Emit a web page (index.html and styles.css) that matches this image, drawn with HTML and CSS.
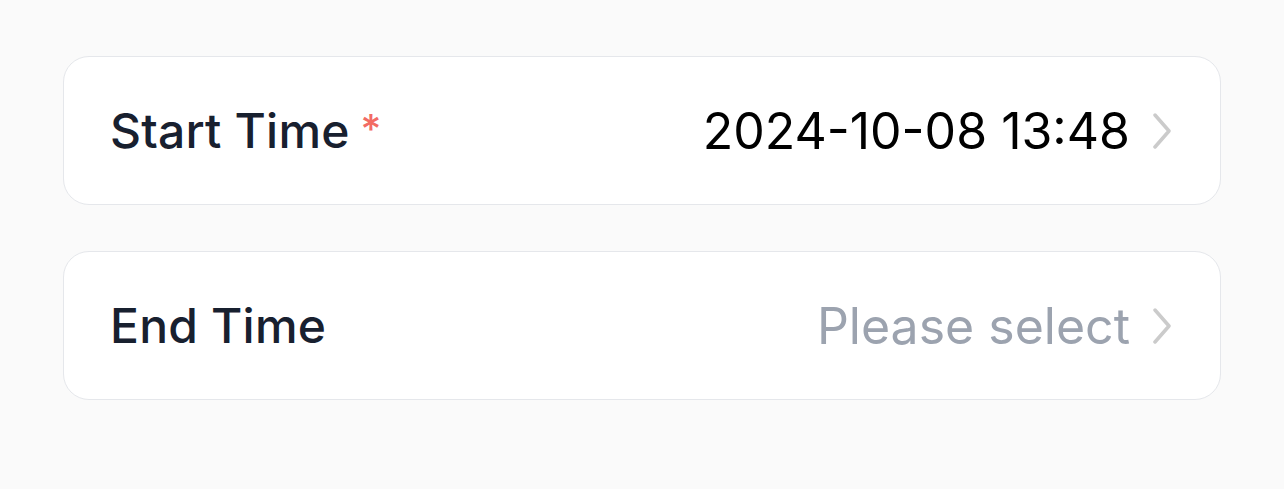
FILE: index.html
```html
<!DOCTYPE html>
<html lang="en">
<head>
    <meta charset="UTF-8">
    <title>Time Range</title>
    <link rel="stylesheet" href="styles.css">
</head>
<body>
    <div class="form">
        <div class="field">
            <span class="label">Start Time<span class="required">*</span></span>
            <span class="value">2024-10-08 13:48</span>
            <svg class="chevron" viewBox="0 0 20 36"><path d="M3 2 L17 18 L3 34" /></svg>
        </div>
        <div class="field">
            <span class="label">End Time</span>
            <span class="value placeholder">Please select</span>
            <svg class="chevron" viewBox="0 0 20 36"><path d="M3 2 L17 18 L3 34" /></svg>
        </div>
    </div>
</body>
</html>
```

FILE: styles.css
```css
body {
    margin: 0;
    padding: 56px 63px 0 63px;
    background-color: #fafafa;
    font-family: Inter, "Noto Sans", sans-serif;
}

.form {
    display: flex;
    flex-direction: column;
    gap: 46px;
}

.field {
    display: flex;
    align-items: center;
    height: 147px;
    padding: 0 48px 0 46px;
    background-color: #fff;
    border: 1px solid #e5e7eb;
    border-radius: 26px;
}

.label {
    flex-grow: 1;
    font-size: 48px;
    font-weight: 500;
    color: #18202f;
    display: flex;
    align-items: flex-start;
    letter-spacing: 0.2px;
}

.required {
    color: #f26b64;
    font-size: 40px;
    margin-left: 11px;
    line-height: 1;
    margin-top: 8px;
}

.value {
    font-size: 50px;
    color: #000;
}

.placeholder {
    color: #9ca3af;
}

.chevron {
    width: 20px;
    height: 36px;
    margin-left: 22px;
    fill: none;
    stroke: #cbcbcb;
    stroke-width: 3.5;
    stroke-linecap: round;
    stroke-linejoin: round;
}
```
